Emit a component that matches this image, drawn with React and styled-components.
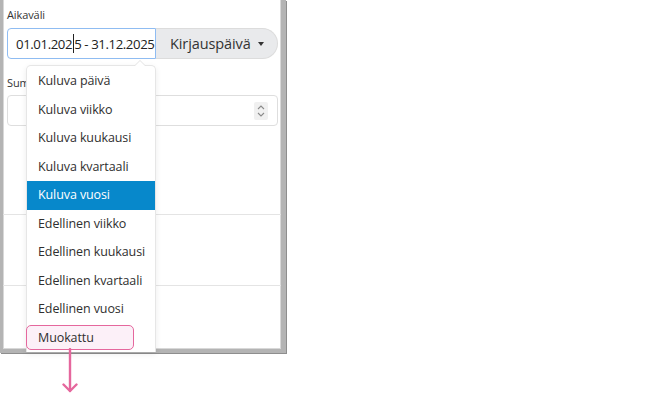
import styled, { createGlobalStyle } from 'styled-components';

const GlobalStyle = createGlobalStyle`
  html, body {
    margin: 0;
    padding: 0;
    background: #ffffff;
    font-family: "Open Sans", "Noto Sans", sans-serif;
    color: #2b2b2b;
  }
`;

const Page = styled.div`
  position: relative;
  width: 670px;
  height: 394px;
`;

const Frame = styled.div`
  position: relative;
  box-sizing: border-box;
  width: 286px;
  height: 353px;
  background: #ffffff;
  border: 3px solid #b4b4b4;
  border-top: none;
  border-right-width: 5px;
  border-bottom-width: 4px;
  box-shadow: inset 1px 0 0 #d8d8d8, inset -1px -1px 0 #d8d8d8, -1px 0 0 #8e8e8e, 1px 1px 0 #8e8e8e;
`;

const Section = styled.div`
  padding: 8px 3px 0 4px;
`;

const Label = styled.div`
  font-size: 11px;
  line-height: 14px;
  color: #333;
  margin-bottom: 6px;
  letter-spacing: -0.1px;
`;

const InputGroup = styled.div`
  display: flex;
  height: 31px;
  width: 271px;
`;

const DateInput = styled.div`
  box-sizing: border-box;
  width: 149px;
  height: 100%;
  display: flex;
  align-items: center;
  padding-left: 8px;
  border: 1px solid #8fbcf2;
  border-radius: 4px 0 0 4px;
  font-size: 13.2px;
  letter-spacing: -0.4px;
  color: #222;
  white-space: nowrap;
  overflow: hidden;
`;

const Caret = styled.span`
  display: inline-block;
  flex: none;
  width: 1px;
  height: 19px;
  background: #222;
  margin: 0 0.5px;
`;

const ModeButton = styled.div`
  box-sizing: border-box;
  flex: 1;
  display: flex;
  align-items: center;
  gap: 7px;
  padding-left: 14px;
  background: #e9eaec;
  border: 1px solid #dcdcdc;
  border-left: none;
  border-radius: 0 16px 16px 0;
  font-size: 14.5px;
  letter-spacing: -0.1px;
  color: #333;
`;

const TriangleDown = styled.span`
  width: 0;
  height: 0;
  border-left: 3.5px solid transparent;
  border-right: 3.5px solid transparent;
  border-top: 4px solid #333;
`;

const SecondLabel = styled(Label)`
  margin-top: 17px;
  margin-bottom: 5px;
`;

const NumberInput = styled.div`
  box-sizing: border-box;
  width: 271px;
  height: 31px;
  border: 1px solid #dedede;
  border-radius: 4px;
  display: flex;
  align-items: center;
  justify-content: flex-end;
  padding-right: 9px;
`;

const Spinner = styled.div`
  width: 14px;
  height: 18px;
  border-radius: 2px;
  background: #f0f0f0;
  display: flex;
  align-items: center;
  justify-content: center;
`;

const Divider = styled.div`
  height: 1px;
  background: #e4e4e4;
  margin-top: ${(p) => p.$top}px;
`;

const Dropdown = styled.ul`
  position: absolute;
  left: 23px;
  top: 65px;
  width: 130px;
  margin: 0;
  padding: 1px 0 0;
  list-style: none;
  box-sizing: border-box;
  background: #fff;
  border: 1px solid #e6e6e6;
  border-bottom: none;
  border-radius: 5px 5px 0 0;
  box-shadow: 0 2px 6px rgba(0, 0, 0, 0.08);
  z-index: 2;

  &::before {
    content: '';
    position: absolute;
    top: -6px;
    right: 9px;
    border-left: 6px solid transparent;
    border-right: 6px solid transparent;
    border-bottom: 6px solid #e2e2e2;
  }

  &::after {
    content: '';
    position: absolute;
    top: -5px;
    right: 10px;
    border-left: 5px solid transparent;
    border-right: 5px solid transparent;
    border-bottom: 5px solid #fff;
  }
`;

const Item = styled.li`
  position: relative;
  height: 28.5px;
  line-height: 28.5px;
  padding-left: 11px;
  font-size: 12.5px;
  letter-spacing: -0.1px;
  color: ${(p) => (p.$active ? '#fff' : '#2f2f2f')};
  background: ${(p) => (p.$active ? '#0788cb' : 'transparent')};
  white-space: nowrap;

  ${(p) => p.$highlight && `
    z-index: 0;
    &::before {
      content: '';
      position: absolute;
      left: -1px;
      top: 1px;
      width: 108px;
      height: 25px;
      box-sizing: border-box;
      border: 1.5px solid #e5679d;
      border-radius: 5px;
      background: #fcf0f8;
      z-index: -1;
    }
  `}
`;

const ItemText = styled.span`
  position: relative;
`;

const Arrow = styled.svg`
  position: absolute;
  left: 62px;
  top: 348px;
  z-index: 3;
`;

const presets = [
  'Kuluva päivä',
  'Kuluva viikko',
  'Kuluva kuukausi',
  'Kuluva kvartaali',
  'Kuluva vuosi',
  'Edellinen viikko',
  'Edellinen kuukausi',
  'Edellinen kvartaali',
  'Edellinen vuosi',
  'Muokattu',
];

export default function App() {
  return (
    <Page>
      <GlobalStyle />
      <Frame>
        <Section>
          <Label>Aikaväli</Label>
          <InputGroup>
            <DateInput>
              01.01.202<Caret />5 - 31.12.2025
            </DateInput>
            <ModeButton>
              Kirjauspäivä
              <TriangleDown />
            </ModeButton>
          </InputGroup>
          <SecondLabel>Summa</SecondLabel>
          <NumberInput>
            <Spinner>
              <svg width="8" height="14" viewBox="0 0 8 14" fill="none" stroke="#8a8a8a" strokeWidth="1.1">
                <path d="M1 5 L4 2 L7 5" />
                <path d="M1 9 L4 12 L7 9" />
              </svg>
            </Spinner>
          </NumberInput>
        </Section>
        <Divider $top={88} />
        <Divider $top={70} />
        <Dropdown>
          {presets.map((label) => (
            <Item
              key={label}
              $active={label === 'Kuluva vuosi'}
              $highlight={label === 'Muokattu'}
            >
              <ItemText>{label}</ItemText>
            </Item>
          ))}
        </Dropdown>
      </Frame>
      <Arrow width="16" height="46" viewBox="0 0 16 46" fill="none" stroke="#e5679d" strokeWidth="2.4" strokeLinecap="round" strokeLinejoin="round">
        <path d="M8 1 V43" />
        <path d="M1.5 36.5 L8 43 L14.5 36.5" />
      </Arrow>
    </Page>
  );
}
